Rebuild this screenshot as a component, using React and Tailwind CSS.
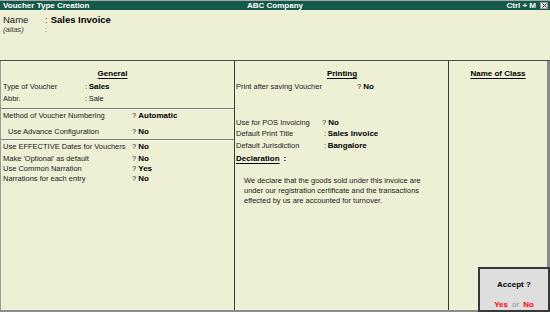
import React from "react";

const F = "font-['Liberation_Sans',Arial,sans-serif]";

function Row({ h = 12, mt = 0, indent = 0, children }) {
  return (
    <div className="flex items-center whitespace-nowrap" style={{ height: h, marginTop: mt, paddingLeft: indent }}>
      {children}
    </div>
  );
}

function Q({ label, w, value }) {
  return (
    <>
      <span className="shrink-0 text-[7.5px] text-[#1a1a1a]" style={{ width: w }}>{label}</span>
      <span className="text-[7.6px] text-[#1a1a1a]">?</span>
      <span className="ml-[2px] text-[8px] font-bold text-black">{value}</span>
    </>
  );
}

function C({ label, w, value, bold = true }) {
  return (
    <>
      <span className="shrink-0 text-[7.5px] text-[#1a1a1a]" style={{ width: w }}>{label}</span>
      <span className="text-[7.6px] text-[#1a1a1a]">:</span>
      <span className={bold ? "ml-[1.5px] text-[8px] font-bold text-black" : "ml-[1.5px] text-[7.5px] text-[#1a1a1a]"}>{value}</span>
    </>
  );
}

function Sep() {
  return <div className="h-[2px] border-t border-[#7c7c7c] bg-white/70" />;
}

export default function App() {
  return (
    <div className={`relative flex h-[312px] w-[550px] flex-col overflow-hidden bg-[#eef0d6] leading-none ${F}`}>
      {/* Title bar */}
      <div className="h-[10px] shrink-0 border-t border-[#a8a8a8] bg-[#145a4a]">
        <div className="grid h-[9px] grid-cols-[1fr_auto_1fr] items-center text-[8px] font-bold text-white">
          <span className="pl-[3px]">Voucher Type Creation</span>
          <span>ABC Company</span>
          <div className="flex items-center justify-end">
            <span>Ctrl + M</span>
            <span className="ml-[4px] mr-[2px] flex h-[7px] w-[8px] items-center justify-center border border-[#9a9a9a] bg-[#e8e8e8]">
              <svg width="5" height="5" viewBox="0 0 5 5">
                <path d="M0.5 0.5 L4.5 4.5 M4.5 0.5 L0.5 4.5" stroke="#333" strokeWidth="1" />
              </svg>
            </span>
          </div>
        </div>
      </div>

      {/* Name section */}
      <div className="h-[51px] shrink-0 border-b border-[#4a4a4a] pl-[3px] pt-[4px]">
        <div className="flex h-[11px] items-center">
          <span className="w-[42px] text-[9.5px] text-[#222]">Name</span>
          <span className="text-[9.5px] text-[#444]">:</span>
          <span className="ml-[3px] text-[9.5px] font-bold text-black">Sales Invoice</span>
        </div>
        <div className="flex h-[10px] items-center">
          <span className="w-[42px] text-[7.6px] italic text-[#333]">(alias)</span>
          <span className="text-[7.6px] text-[#444]">:</span>
        </div>
      </div>

      {/* Columns */}
      <div className="flex min-h-0 flex-1 border-b-2 border-l border-r-[3px] border-b-[#8c8c8c] border-l-[#9a9a9a] border-r-[#8c8c8c]">
        {/* General */}
        <div className="w-[234px] shrink-0 border-r border-[#3c3c3c]">
          <div className="mt-[7px] flex h-[12px] items-center justify-center pr-[10px]">
            <span className="text-[8px] font-bold text-black underline underline-offset-[1.5px]">General</span>
          </div>
          <Row mt={1} indent={2}><C label="Type of Voucher" w={82} value="Sales" /></Row>
          <Row indent={2}><C label="Abbr." w={82} value="Sale" bold={false} /></Row>
          <div className="mt-[3px]"><Sep /></div>
          <Row indent={2}><Q label="Method of Voucher Numbering" w={129} value="Automatic" /></Row>
          <Row mt={4} indent={7}><Q label="Use Advance Configuration" w={124} value="No" /></Row>
          <div className="mt-[1px]"><Sep /></div>
          <Row indent={2}><Q label="Use EFFECTIVE Dates for Vouchers" w={129} value="No" /></Row>
          <Row h={11} indent={2}><Q label="Make 'Optional' as default" w={129} value="No" /></Row>
          <Row h={10} indent={2}><Q label="Use Common Narration" w={129} value="Yes" /></Row>
          <Row h={10} indent={2}><Q label="Narrations for each entry" w={129} value="No" /></Row>
        </div>

        {/* Printing */}
        <div className="w-[214px] shrink-0 border-r border-[#3c3c3c] pl-[1px]">
          <div className="mt-[7px] flex h-[12px] items-center justify-center">
            <span className="text-[8px] font-bold text-black underline underline-offset-[1.5px]">Printing</span>
          </div>
          <Row mt={1}><Q label="Print after saving Voucher" w={121} value="No" /></Row>
          <Row h={11} mt={24}><Q label="Use for POS Invoicing" w={86} value="No" /></Row>
          <Row><C label="Default Print Title" w={88} value="Sales Invoice" /></Row>
          <Row><C label="Default Jurisdiction" w={88} value="Bangalore" /></Row>
          <Row mt={1}>
            <span className="text-[8px] font-bold text-black underline underline-offset-[1.5px]">Declaration</span>
            <span className="ml-[4px] text-[8px] font-bold text-black">:</span>
          </Row>
          <div className="mt-[11px] pl-[8px] text-[7.5px] leading-[10px] text-[#1a1a1a]">
            <div>We declare that the goods sold under this invoice are</div>
            <div>under our registration certificate and the transactions</div>
            <div>effected by us are accounted for turnover.</div>
          </div>
        </div>

        {/* Name of Class */}
        <div className="min-w-0 flex-1">
          <div className="mt-[7px] flex h-[12px] items-center justify-center">
            <span className="text-[8px] font-bold text-black underline underline-offset-[1.5px]">Name of Class</span>
          </div>
        </div>
      </div>

      {/* Accept box */}
      <div className="absolute bottom-0 right-0 flex h-[45px] w-[72px] flex-col items-center border-2 border-[#383838] bg-[#dedede]">
        <div className="mt-[11px] flex h-[10px] items-center text-[8px] font-bold text-black">Accept ?</div>
        <div className="mt-[11px] flex h-[10px] items-center text-[8px]">
          <span className="font-bold text-[#f00]">Yes</span>
          <span className="mx-[4px] text-[#9a9a9a]">or</span>
          <span className="font-bold text-[#f00]">No</span>
        </div>
      </div>
    </div>
  );
}
